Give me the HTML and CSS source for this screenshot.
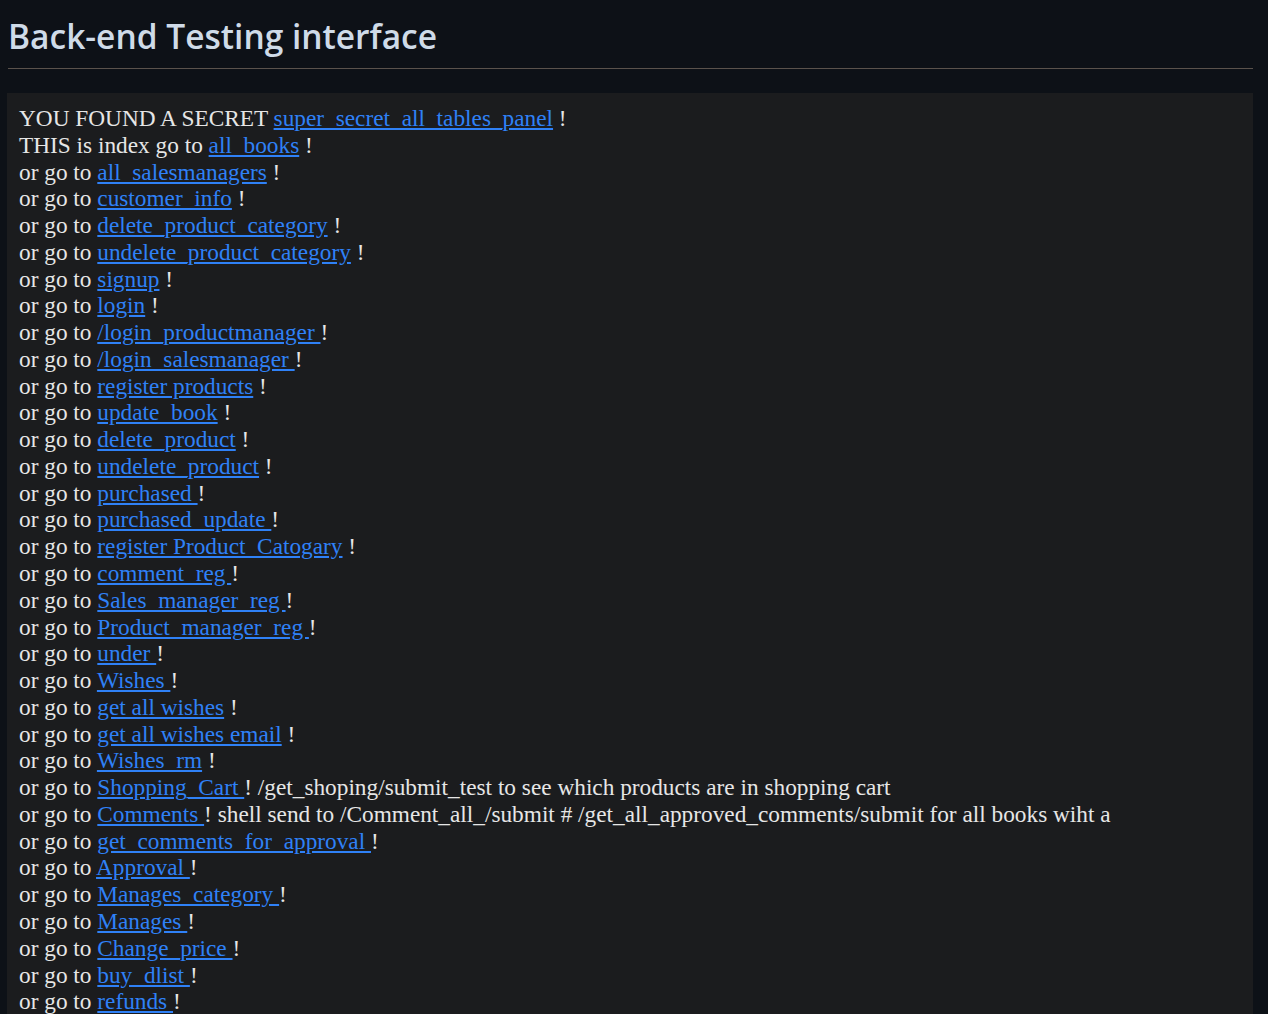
FILE: index.html
```html
<!DOCTYPE html>
<html lang="en">
<head>
<meta charset="utf-8">
<title>Back-end Testing interface</title>
<link rel="stylesheet" href="styles.css">
</head>
<body>
<header class="page-head">
  <h1 class="title">Back-end Testing interface</h1>
</header>
<main class="panel">
YOU FOUND A SECRET <a href="#">super_secret_all_tables_panel</a> !<br>
THIS is index go to <a href="#">all_books</a> !<br>
or go to <a href="#">all_salesmanagers</a> !<br>
or go to <a href="#">customer_info</a> !<br>
or go to <a href="#">delete_product_category</a> !<br>
or go to <a href="#">undelete_product_category</a> !<br>
or go to <a href="#">signup</a> !<br>
or go to <a href="#">login</a> !<br>
or go to <a href="#">/login_productmanager </a>!<br>
or go to <a href="#">/login_salesmanager </a>!<br>
or go to <a href="#">register products</a> !<br>
or go to <a href="#">update_book</a> !<br>
or go to <a href="#">delete_product</a> !<br>
or go to <a href="#">undelete_product</a> !<br>
or go to <a href="#">purchased </a>!<br>
or go to <a href="#">purchased_update </a>!<br>
or go to <a href="#">register Product_Catogary</a> !<br>
or go to <a href="#">comment_reg </a>!<br>
or go to <a href="#">Sales_manager_reg </a>!<br>
or go to <a href="#">Product_manager_reg </a>!<br>
or go to <a href="#">under </a>!<br>
or go to <a href="#">Wishes </a>!<br>
or go to <a href="#">get all wishes</a> !<br>
or go to <a href="#">get all wishes email</a> !<br>
or go to <a href="#">Wishes_rm</a> !<br>
or go to <a href="#">Shopping_Cart </a>! /get_shoping/submit_test to see which products are in shopping cart<br>
or go to <a href="#">Comments </a>! shell send to /Comment_all_/submit # /get_all_approved_comments/submit for all books wiht a<br>
or go to <a href="#">get_comments_for_approval </a>!<br>
or go to <a href="#">Approval </a>!<br>
or go to <a href="#">Manages_category </a>!<br>
or go to <a href="#">Manages </a>!<br>
or go to <a href="#">Change_price </a>!<br>
or go to <a href="#">buy_dlist </a>!<br>
or go to <a href="#">refunds </a>!<br>
</main>
</body>
</html>
```
FILE: styles.css
```css
html, body {
  background: #0d1117;
}
body {
  margin: 0;
  padding: 0 15px 0 7px;
  color: #e6e6e6;
  font-family: "Liberation Serif", "Times New Roman", serif;
}
.page-head {
  border-bottom: 1px solid #5a524c;
  margin-left: 1px;
  padding-top: 14px;
  padding-bottom: 10px;
}
.title {
  margin: 0;
  font-family: "Open Sans", "Noto Sans", sans-serif;
  font-weight: 600;
  font-size: 33.5px;
  line-height: 44px;
  color: #cfdbe8;
}
.panel {
  display: block;
  margin-top: 24px;
  background: #1b1c1e;
  padding: 12px 12px 20px 12px;
  font-size: 23.3px;
  line-height: 26.76px;
  color: #e6e6e6;
}
.panel a {
  color: #2f81f7;
  text-decoration: underline;
}
```
